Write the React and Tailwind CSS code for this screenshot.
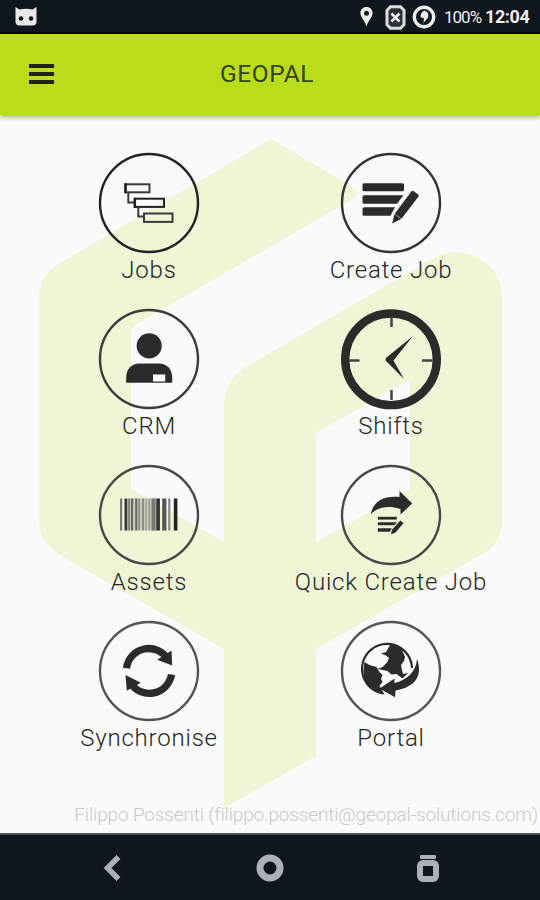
import React from "react";

const INK = "#2b2b2b";

const JobsIcon = () => (
    <g fill="none" stroke="#3a3a3a" strokeWidth="2">
        <rect x="26.5" y="31.3" width="24" height="8" />
        <rect x="36" y="45.7" width="29" height="8.2" stroke="#222" />
        <rect x="45" y="60.5" width="28.5" height="8.4" />
        <path d="M29.3 40v9.5h6M39.3 55v8.5h5" />
        <path d="M26.5 30.3v10M35.8 44.7v10.2" strokeWidth="2.5" stroke="#222" />
    </g>
);

const CreateJobIcon = () => (
    <g fill={INK}>
        <rect x="21.5" y="30.3" width="41.5" height="8" rx="1.5" />
        <path d="M23 42.3h39.5l-6.5 8.4h-33q-1.5 0-1.5-1.5v-5.4q0-1.5 1.5-1.5z" />
        <path d="M23 54.2h31l-4.5 8.5h-26.5q-1.5 0-1.5-1.5v-5.5q0-1.5 1.5-1.5z" />
        <path d="M70.5 38.2q.8-1 2-.2l4.7 3.6q1 .9.3 2l-17 22.2-6.8-5z" />
        <path d="M53.5 61l6.6 4.9-8.9 4.6z" />
    </g>
);

const CrmIcon = () => (
    <g fill={INK}>
        <circle cx="50.2" cy="36.8" r="12.6" />
        <path d="M27.2 73.8v-5c0-9 5.5-14.3 13.5-14.3h19c8 0 13.5 5.3 13.5 14.3v5z" />
        <rect x="54" y="65.5" width="12.2" height="7" fill="#fff" />
    </g>
);

const ShiftsIcon = () => (
    <g>
        <circle cx="50" cy="50.3" r="45.8" fill="none" stroke={INK} strokeWidth="8.4" />
        <path
            d="M50.5 8v10M50.5 81v10M8 51.5h10.5M81 51.5h10.5"
            stroke="#444"
            strokeWidth="2.5"
        />
        <path d="M72 27L45.5 48.5q-2 2 0 4L63 70 52.5 51.5z" fill={INK} />
    </g>
);

// x, width, colour of each stripe
const STRIPES = [
    [21, 2.2, "#777"],
    [25.5, 2.7, "#333"],
    [29.2, 1.7, "#777"],
    [32, 2, "#666"],
    [36.2, 2, "#666"],
    [39.2, 1.7, "#888"],
    [43, 2, "#8c8c86"],
    [46.4, 1.6, "#a5a5a0"],
    [49.5, 1.6, "#999"],
    [52.5, 4, "#777"],
    [57.3, 3.6, "#333"],
    [63.2, 4.2, "#555"],
    [69.2, 2.2, "#888"],
    [74.8, 3.6, "#222"],
];

const AssetsIcon = () => (
    <g>
        <rect x="28" y="33.5" width="33" height="32" fill="#c9ccb8" />
        {STRIPES.map(([x, w, color]) => (
            <rect key={x} x={x} y="33.5" width={w} height="32" fill={color} />
        ))}
    </g>
);

const QuickCreateIcon = () => (
    <g fill={INK}>
        <path d="M29.8 49.5C32 36 43 30.5 58.5 32v-6L71.2 38.5 59.5 49.5v-5.5C47 40 36 42 29.8 49.5z" />
        <rect x="36.8" y="51.8" width="19" height="2.8" />
        <path d="M36.8 57.2h19l-2.5 3h-16.5zM36.8 63.2h14l-2 3.6h-12z" />
        <path d="M59.3 55.5l3.3 2.4-8 9.5-4.5 1.8.8-4.5z" />
    </g>
);

const SyncIcon = () => (
    <g>
        <path
            d="M27.5 47.3A22.4 22.4 0 0 1 69 38.5M72.5 53.5A22.4 22.4 0 0 1 31.5 62"
            fill="none"
            stroke={INK}
            strokeWidth="7.3"
        />
        <path d="M72.5 29.5l.7 15-15-5.7zM26.5 54l1.3 15.8 14-8z" fill={INK} />
    </g>
);

const PortalIcon = () => (
    <g fill={INK}>
        <path
            d="M42 72.5A25 25 0 1 1 71 47"
            fill="none"
            stroke={INK}
            strokeWidth="2.2"
        />
        <path d="M23.5 41l5 3 7 2 3 5 3 3-1.5 4 1.5 3-3 4 5 8.5C31 71 22 63 22.5 49z" />
        <path d="M50 22.5l8 2.5 4 6 2 5-1 4-3 4 1 5 1 4 5-1-5.5 5.5-6-4.5-5 .5-4-3.5-10-2 5-2 5-5 1.5-4-3-2.5-5-2 5-1.5z" />
        <path d="M76 38C82 54 75 66 54.5 69.5l-.5 6.8L38.5 67.5 53.5 57.5v4.5C66 59 75 51 76 38z" />
    </g>
);

const ITEMS = [
    { label: "Jobs", icon: <JobsIcon />, ring: "#222" },
    { label: "Create Job", icon: <CreateJobIcon />, ring: "#333" },
    { label: "CRM", icon: <CrmIcon />, ring: "#3c3c3c" },
    { label: "Shifts", icon: <ShiftsIcon />, ring: null },
    { label: "Assets", icon: <AssetsIcon />, ring: "#484845" },
    { label: "Quick Create Job", icon: <QuickCreateIcon />, ring: "#484845" },
    { label: "Synchronise", icon: <SyncIcon />, ring: "#555" },
    { label: "Portal", icon: <PortalIcon />, ring: "#555" },
];

const StatusBar = () => (
    <div className="flex h-[34px] items-center border-b-2 border-[#02050f] bg-[#10161d] pt-[2px] pr-[10px] pl-[14px] text-[#eeeeee]">
        <svg width="24" height="22" viewBox="0 0 24 22">
            <path
                d="M1.5 1l4 2.5q6.5-1.5 13 0l4-2.5v14.5q0 4-4 4h-13q-4 0-4-4z"
                fill="#e8e8e8"
            />
            <circle cx="7" cy="12.5" r="2.3" fill="#10161d" />
            <circle cx="17" cy="12.5" r="2.3" fill="#10161d" />
        </svg>
        <div className="ml-auto flex items-center">
            <svg width="13" height="20" viewBox="0 0 13 20">
                <path
                    d="M6.5 0C2.8 0 .4 2.7.4 6c0 4.5 4.2 7 6.1 13.5C8.4 13 12.6 10.5 12.6 6c0-3.3-2.4-6-6.1-6zm0 3.7a2.5 2.5 0 1 1 0 5 2.5 2.5 0 0 1 0-5z"
                    fill="#eee"
                    fillRule="evenodd"
                />
            </svg>
            <svg className="ml-[12px]" width="21" height="25" viewBox="0 0 21 25">
                <path
                    d="M5.5 1.8h10l3.5 3.5v14.4l-3.5 3.5h-10L2 19.7V5.3z"
                    fill="#2b3036"
                    stroke="#ddd"
                    strokeWidth="3"
                />
                <path d="M6.5 8.5l8 8M14.5 8.5l-8 8" stroke="#eee" strokeWidth="2.6" />
            </svg>
            <svg className="ml-[6px]" width="24" height="24" viewBox="0 0 24 24">
                <circle cx="12" cy="12" r="9.7" fill="none" stroke="#eee" strokeWidth="3.4" />
                <path d="M12.5 5.5a5 5 0 0 1 3.5 7L11.5 18l.5-4.5-3.5-1.5q0-5 4-6.5z" fill="#eee" />
            </svg>
            <span className="ml-[8px] w-[38px] text-[17px] leading-none tracking-[-1px]">
                100%
            </span>
            <span className="ml-[3px] w-[45px] text-[18px] leading-none font-bold tracking-[-0.4px]">
                12:04
            </span>
        </div>
    </div>
);

const AppBar = () => (
    <header className="relative flex h-[81px] items-center justify-center bg-[#b9dd18] pr-[6px] pb-[1px] shadow-[0_2px_5px_rgba(0,0,0,0.35)]">
        <button className="absolute top-[30px] left-[29px] flex flex-col gap-[4px]">
            <span className="h-[4px] w-[25px] bg-[#1c2400]" />
            <span className="h-[4px] w-[25px] bg-[#1c2400]" />
            <span className="h-[4px] w-[25px] bg-[#1c2400]" />
        </button>
        <h1 className="text-[24.5px] leading-[36px] tracking-[0.6px] text-[#37421a]">GEOPAL</h1>
    </header>
);

const Watermark = () => (
    <svg className="absolute top-0 left-0" width="540" height="718" viewBox="0 115 540 718">
        <path
            d="M271 139L346 183Q366 193 346 203L137 324Q131 327 131 333V489L224 542V405Q224 380 246 367L430 260Q456 245 480 259Q502 272 502 297V521Q502 542 484 553L316 649V756L224 808V649L65 558Q39 543 39 521V297Q39 275 62 262ZM316 433V542L410 489V379Z"
            fill="#f0f5d6"
            fillRule="evenodd"
        />
    </svg>
);

const MenuItem = ({ label, icon, ring }) => (
    <button className="flex h-[156px] flex-col items-center">
        <svg className="shrink-0 overflow-visible" width="100" height="100" viewBox="0 0 100 100">
            {ring && (
                <circle cx="50" cy="50" r="49" fill="none" stroke={ring} strokeWidth="2.4" />
            )}
            {icon}
        </svg>
        <span className="mt-[1px] text-[24px] leading-[32px] font-light tracking-[0.8px] whitespace-nowrap text-[#262626]">
            {label}
        </span>
    </button>
);

const NavBar = () => (
    <nav className="flex h-[67px] items-center border-t-2 border-[#50555a] bg-[#10161d] pl-[103px]">
        <svg width="19" height="28" viewBox="0 0 19 28">
            <path
                d="M15.5 3L4.5 14l11 11"
                fill="none"
                stroke="#abb1b7"
                strokeWidth="5.5"
            />
        </svg>
        <svg className="ml-[134px]" width="28" height="28" viewBox="0 0 28 28">
            <circle cx="14" cy="14" r="10" fill="none" stroke="#abb1b7" strokeWidth="7" />
        </svg>
        <svg className="ml-[133px]" width="22" height="28" viewBox="0 0 22 28">
            <rect x="3" y="1" width="16" height="4" rx="1" fill="#abb1b7" />
            <rect x="3" y="9" width="16" height="16" rx="3" fill="none" stroke="#abb1b7" strokeWidth="6" />
        </svg>
    </nav>
);

export default function App() {
    return (
        <div className="flex h-[900px] w-[540px] flex-col overflow-hidden bg-[#fafafa] font-['Roboto','Liberation_Sans',sans-serif]">
            <StatusBar />
            <AppBar />
            <main className="relative flex h-[718px] flex-col">
                <Watermark />
                <div className="relative ml-[28px] grid w-[484px] grid-cols-2 pt-[38px]">
                    {ITEMS.map((item) => (
                        <MenuItem key={item.label} {...item} />
                    ))}
                </div>
                <p className="relative mt-auto mb-[6px] pr-[2px] text-right text-[19px] leading-[24px] font-light tracking-[-0.15px] whitespace-nowrap text-[#c9c9c9]">
                    Filippo Possenti (filippo.possenti@geopal-solutions.com)
                </p>
            </main>
            <NavBar />
        </div>
    );
}
